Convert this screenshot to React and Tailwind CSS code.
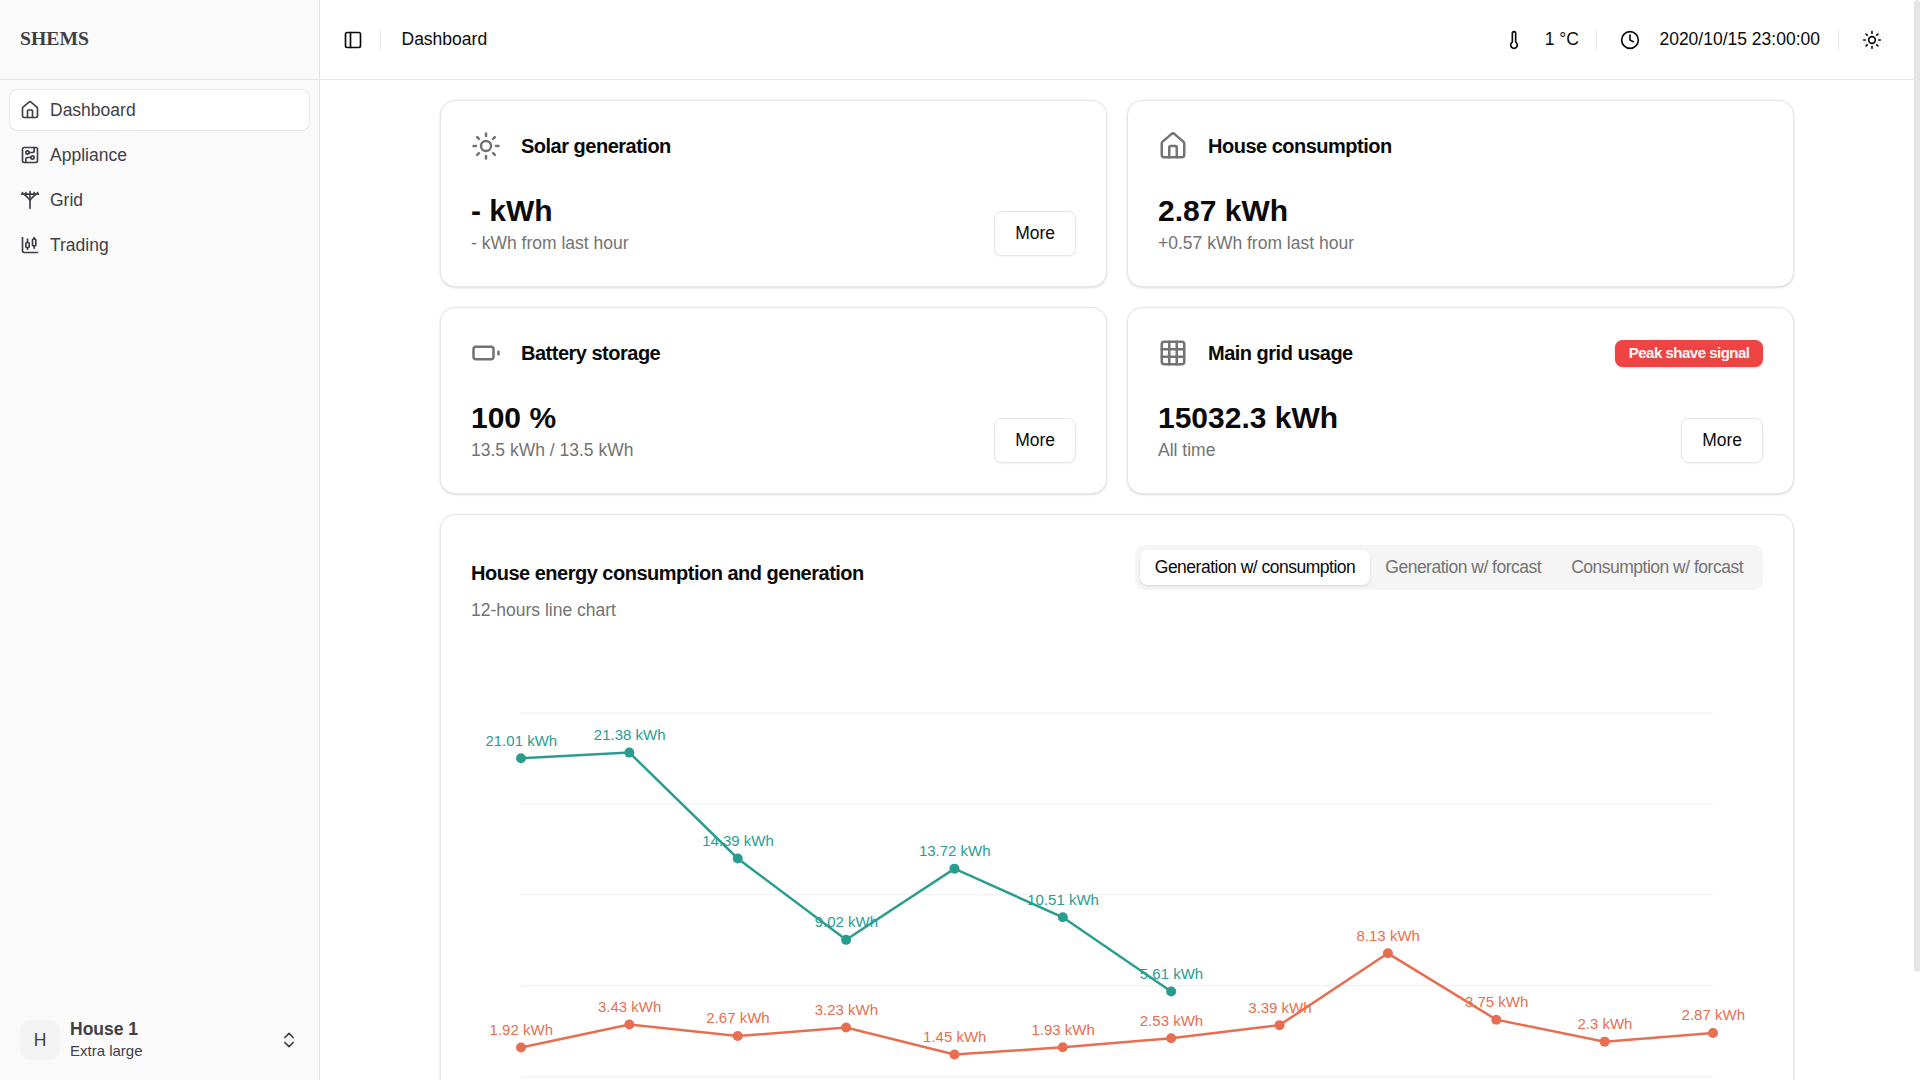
import React from "react";
import {
  House,
  CircuitBoard,
  UtilityPole,
  ChartCandlestick,
  ChevronsUpDown,
  PanelLeft,
  Thermometer,
  Clock,
  Sun,
  Grid3x3,
} from "lucide-react";

const NAV = [
  { label: "Dashboard", icon: House, active: true },
  { label: "Appliance", icon: CircuitBoard },
  { label: "Grid", icon: UtilityPole },
  { label: "Trading", icon: ChartCandlestick },
];

const GENERATION = [21.01, 21.38, 14.39, 9.02, 13.72, 10.51, 5.61];
const CONSUMPTION = [1.92, 3.43, 2.67, 3.23, 1.45, 1.93, 2.53, 3.39, 8.13, 3.75, 2.3, 2.87];

const GRID_VALUES = [0, 6, 12, 18, 24];
const X_START = 50;
const X_END = 1242;
const ZERO_Y = 423.5;
const UNIT = 15.15;

const px = (i) => X_START + (i * (X_END - X_START)) / 11;
const py = (v) => ZERO_Y - v * UNIT;

function BatteryIcon({ className }) {
  return (
    <svg
      className={className}
      viewBox="0 0 24 24"
      fill="none"
      stroke="currentColor"
      strokeWidth="2"
      strokeLinecap="round"
      strokeLinejoin="round"
    >
      <rect width="16" height="10" x="2" y="7" rx="2" ry="2" />
      <line x1="22" x2="22" y1="11" y2="13" />
    </svg>
  );
}

function Sidebar() {
  return (
    <aside className="flex h-full w-[320px] shrink-0 flex-col border-r border-[#e4e4e7] bg-[#fafafa] text-[#3f3f46]">
      <div className="flex h-20 shrink-0 items-center border-b border-[#e4e4e7] px-5 pb-0.5">
        <span className="font-['Liberation_Serif',serif] text-[19.7px] font-bold leading-none">SHEMS</span>
      </div>
      <nav className="flex flex-1 flex-col gap-[5px] p-2.5">
        {NAV.map(({ label, icon: Icon, active }) => (
          <a
            key={label}
            className={
              active
                ? "flex h-10 items-center gap-2.5 rounded-[7.5px] bg-white px-2.5 shadow-[0_0_0_1px_#e5e7eb]"
                : "flex h-10 items-center gap-2.5 rounded-[7.5px] px-2.5"
            }
          >
            <Icon className="size-5 shrink-0" />
            <span>{label}</span>
          </a>
        ))}
      </nav>
      <div className="flex h-20 shrink-0 items-center gap-2.5 px-5">
        <div className="flex size-10 items-center justify-center rounded-[10px] bg-[#f4f4f5]">H</div>
        <div className="flex flex-1 flex-col">
          <span className="pb-px font-bold leading-[21px]">House 1</span>
          <span className="text-[15px] leading-5">Extra large</span>
        </div>
        <ChevronsUpDown className="size-5" />
      </div>
    </aside>
  );
}

function Divider() {
  return <div className="h-5 w-px shrink-0 bg-[#e5e5e5]" />;
}

function Header() {
  return (
    <header className="flex h-20 shrink-0 items-center border-b border-[#e5e5e5] pl-[15px] pr-5">
      <div className="mr-2.5 flex size-[35px] items-center justify-center">
        <PanelLeft className="size-5" />
      </div>
      <Divider />
      <span className="ml-[20.5px] flex-1">Dashboard</span>
      <div className="flex w-[45px] justify-center">
        <Thermometer className="size-5" />
      </div>
      <span className="ml-[8.5px] mr-[17.5px]">1 °C</span>
      <Divider />
      <div className="ml-2.5 flex w-[45px] justify-center">
        <Clock className="size-5" />
      </div>
      <span className="ml-[7px] mr-[18px]">2020/10/15 23:00:00</span>
      <Divider />
      <div className="ml-2.5 flex w-[45px] justify-center">
        <Sun className="size-5" />
      </div>
    </header>
  );
}

function StatCard({ icon: Icon, title, value, note, more, badge }) {
  return (
    <section className="flex h-[187px] flex-col justify-between rounded-[15px] border border-[#e5e5e5] bg-white p-[30px] shadow-sm">
      <div className="flex h-[30px] items-center">
        <Icon className="size-[30px] text-[#737373]" />
        <h2 className="ml-5 flex-1 text-[20px] font-bold leading-none tracking-[-0.5px]">{title}</h2>
        {badge && (
          <span className="flex h-[27px] items-center rounded-[7.5px] bg-[#ef4444] px-[13.5px] text-[15px] font-bold leading-5 tracking-[-0.5px] text-[#fafafa] shadow-sm">
            {badge}
          </span>
        )}
      </div>
      <div className="flex items-end justify-between">
        <div>
          <div className="text-[30px] font-bold leading-10">{value}</div>
          <div className="text-[#737373]">{note}</div>
        </div>
        {more && (
          <button className="h-[45px] rounded-[7.5px] border border-[#e5e5e5] bg-white px-5 shadow-xs">More</button>
        )}
      </div>
    </section>
  );
}

function Series({ values, color }) {
  return (
    <g>
      <polyline
        points={values.map((v, i) => `${px(i)},${py(v)}`).join(" ")}
        fill="none"
        stroke={color}
        strokeWidth="2.5"
      />
      {values.map((v, i) => (
        <circle key={i} cx={px(i)} cy={py(v)} r="5" fill={color} />
      ))}
      {values.map((v, i) => (
        <text key={i} x={px(i) + 0.3} y={py(v) - 12.6} textAnchor="middle" fontSize="15" fill={color}>
          {v} kWh
        </text>
      ))}
    </g>
  );
}

function EnergyChart() {
  return (
    <svg className="block h-[560px] w-[1292px]" viewBox="0 0 1292 560">
      {GRID_VALUES.map((v) => (
        <line
          key={v}
          x1={X_START}
          x2={X_END}
          y1={py(v)}
          y2={py(v)}
          stroke="#e5e5e5"
          strokeOpacity="0.5"
          strokeWidth="1.25"
        />
      ))}
      <Series values={CONSUMPTION} color="#e76e50" />
      <Series values={GENERATION} color="#2a9d90" />
    </svg>
  );
}

function ChartCard() {
  return (
    <section className="col-span-2 rounded-[15px] border border-[#e5e5e5] bg-white p-[30px] shadow-sm">
      <div className="flex h-[45px] items-start justify-between tracking-[-0.5px]">
        <h2 className="pt-[18px] text-[20px] font-bold leading-5">House energy consumption and generation</h2>
        <div className="flex h-[45px] items-center rounded-[10px] bg-[#f5f5f5] p-[5px] text-[#737373]">
          <span className="flex h-[35px] items-center rounded-[7.5px] bg-white px-[15px] text-[#0a0a0a] shadow-sm">
            Generation w/ consumption
          </span>
          <span className="px-[15px]">Generation w/ forcast</span>
          <span className="px-[15px]">Consumption w/ forcast</span>
        </div>
      </div>
      <p className="mt-2 text-[#737373]">12-hours line chart</p>
      <div className="mt-[30px]">
        <EnergyChart />
      </div>
    </section>
  );
}

export default function App() {
  return (
    <div className="flex h-screen w-full overflow-hidden bg-white font-['Liberation_Sans',Arial,sans-serif] text-[17.5px] leading-[25px] text-[#0a0a0a]">
      <Sidebar />
      <div className="flex min-w-0 flex-1 flex-col">
        <Header />
        <main className="min-h-0 flex-1 overflow-hidden px-[120px] pt-5">
          <div className="grid grid-cols-2 gap-5">
            <StatCard icon={Sun} title="Solar generation" value="- kWh" note="- kWh from last hour" more />
            <StatCard icon={House} title="House consumption" value="2.87 kWh" note="+0.57 kWh from last hour" />
            <StatCard icon={BatteryIcon} title="Battery storage" value="100 %" note="13.5 kWh / 13.5 kWh" more />
            <StatCard
              icon={Grid3x3}
              title="Main grid usage"
              value="15032.3 kWh"
              note="All time"
              badge="Peak shave signal"
              more
            />
            <ChartCard />
          </div>
        </main>
      </div>
      <div className="w-1.5 shrink-0">
        <div className="h-[972px] rounded-full bg-[#e5e5e5]" />
      </div>
    </div>
  );
}
